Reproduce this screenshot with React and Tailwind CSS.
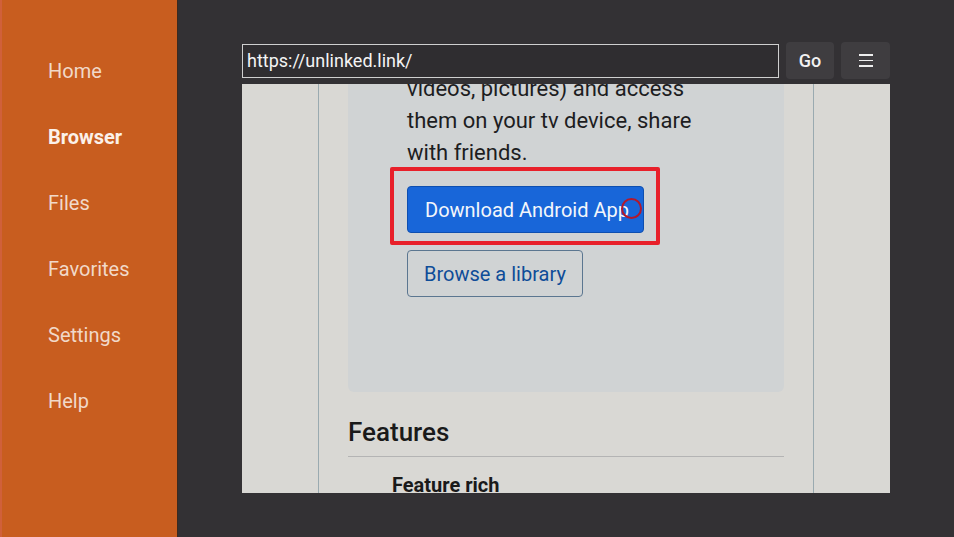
import React from 'react';

const navItems = ['Home', 'Browser', 'Files', 'Favorites', 'Settings', 'Help'];

const Sidebar = ({ active }) => (
    <div className="w-[178px] flex-none h-full bg-[#c85d1f] border-l-2 border-l-[#d0603a] border-r border-r-[#3a2a20] pt-[54px]">
        <ul className="flex flex-col">
            {navItems.map(item => (
                <li key={item}
                    className={`h-[66px] pl-[46px] text-[20px] leading-[34px] ${item === active ? 'font-bold text-[#fbf1ea]' : 'text-[#f1d9c9]'}`}>
                    {item}
                </li>
            ))}
        </ul>
    </div>
);

const Toolbar = ({ url }) => (
    <div className="flex items-center h-[37px] gap-[7px]">
        <div className="w-[537px] h-[34px] border border-[#cfcfcf] bg-[#2f2d30] flex items-center pl-[4px]">
            <span className="text-[18px] text-[#f4f4f4]">{url}</span>
        </div>
        <button className="w-[48px] h-[37px] rounded bg-[#3f3d40] text-[18px] font-medium text-[#f2f2f2]">Go</button>
        <button className="w-[49px] h-[37px] rounded bg-[#3f3d40] flex flex-col items-center justify-center gap-[4px]">
            <span className="block w-[14px] h-[1.5px] bg-[#eeeeee]" />
            <span className="block w-[14px] h-[1.5px] bg-[#eeeeee]" />
            <span className="block w-[14px] h-[1.5px] bg-[#eeeeee]" />
        </button>
    </div>
);

const WebPage = () => (
    <div className="w-[648px] h-[409px] mt-[5px] bg-[#d9d8d4] overflow-hidden">
        <div className="ml-[76px] w-[496px] h-full flex flex-col border-l border-r border-[#9aaab0] pl-[29px] pr-[29px]">
            {/* hero block, scrolled partly out of view */}
            <div className="-mt-[11px] bg-[#d0d3d4] rounded-b-md pl-[59px] pr-[20px] pb-[95px]">
                <p className="text-[22px] leading-[32px] text-[#1d1d1f]">
                    videos, pictures) and access<br />
                    them on your tv device, share<br />
                    with friends.
                </p>
                <div className="relative mt-[17px] w-fit">
                    <div className="absolute -left-[17px] -top-[19px] w-[270px] h-[78px] border-[4px] border-[#e8202a] rounded-[2px]" />
                    <button className="relative h-[47px] pl-[17px] pr-[14px] rounded bg-[#1866d9] border border-[#0e4fb0] text-[20px] text-[#f3f6fb]">
                        Download Android App
                    </button>
                    <span className="absolute left-[214px] top-[12px] w-[21px] h-[21px] rounded-full border-2 border-[#b3182c]" />
                </div>
                <button className="mt-[17px] w-fit h-[47px] px-[16px] rounded border border-[#5b7690] text-[20px] text-[#0e4c98]">
                    Browse a library
                </button>
            </div>
            <h2 className="mt-[24px] text-[26px] leading-[32px] font-medium text-[#1a1a1a]">Features</h2>
            <hr className="mt-[8px] border-t border-[#b4b4b4]" />
            <h3 className="mt-[15px] ml-[44px] text-[20px] leading-[26px] font-bold text-[#1a1a1a]">Feature rich</h3>
        </div>
    </div>
);

export default function App() {
    return (
        <div className="flex w-[954px] h-[537px] bg-[#333134] overflow-hidden" style={{ fontFamily: 'Roboto, "Noto Sans", sans-serif' }}>
            <Sidebar active="Browser" />
            <div className="flex-1 pl-[64px] pt-[42px]">
                <Toolbar url="https://unlinked.link/" />
                <WebPage />
            </div>
        </div>
    );
}
